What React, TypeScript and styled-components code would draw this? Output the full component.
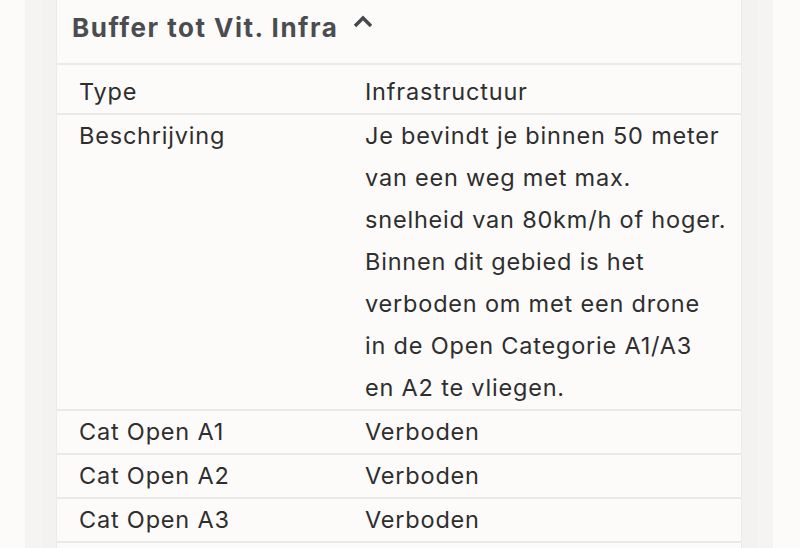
import React from "react";
import styled, { createGlobalStyle } from "styled-components";

const Global = createGlobalStyle`
  html, body { margin: 0; padding: 0; background: #fcfbfa; }
  body { font-family: "Inter", "Noto Sans", sans-serif; -webkit-font-smoothing: antialiased; }
`;

const Page = styled.div`
  height: 548px;
  overflow: hidden;
  padding: 0 27px 0 25px;
  background: #fcfbfa;
`;

const Outer = styled.div`
  height: 100%;
  background: #f5f4f3;
  padding: 0 16px 0 17px;
`;

const Inner = styled.div`
  height: 100%;
  background: #f3f2f1;
  padding: 0 15px 0 14px;
`;

const Card = styled.section`
  background: #fcfbfa;
  border-left: 1px solid #ecebea;
  border-right: 1px solid #ecebea;
  height: 100%;
`;

const Header = styled.header`
  height: 65px;
  box-sizing: border-box;
  border-bottom: 2px solid #ebeae9;
  display: flex;
  align-items: center;
  gap: 14px;
  padding: 0 0 8px 15px;
`;

const Title = styled.h2`
  margin: 0;
  font-size: 26px;
  font-weight: 700;
  letter-spacing: 1.5px;
  color: #4a4c50;
`;

const Caret = styled.svg`
  width: 22px;
  height: 14px;
  margin-top: -14px;
`;

const Table = styled.table`
  width: 100%;
  table-layout: fixed;
  border-collapse: collapse;
  margin-top: 6px;
  font-size: 23.5px;
  letter-spacing: 0.8px;
  color: #2e2e2e;
`;

const Row = styled.tr`
  border-bottom: 2px solid #ebeae9;
`;

const Cell = styled.td<{ $wide?: boolean }>`
  vertical-align: top;
  line-height: 42px;
  box-sizing: border-box;
  padding: 0 4px 0 22px;
  width: ${(p) => (p.$wide ? "auto" : "286px")};
`;

const Line = styled.span`
  display: block;
  white-space: nowrap;
`;

const rows: [string, string[]][] = [
  ["Type", ["Infrastructuur"]],
  [
    "Beschrijving",
    [
      "Je bevindt je binnen 50 meter",
      "van een weg met max.",
      "snelheid van 80km/h of hoger.",
      "Binnen dit gebied is het",
      "verboden om met een drone",
      "in de Open Categorie A1/A3",
      "en A2 te vliegen.",
    ],
  ],
  ["Cat Open A1", ["Verboden"]],
  ["Cat Open A2", ["Verboden"]],
  ["Cat Open A3", ["Verboden"]],
];

export default function App() {
  return (
    <>
      <Global />
      <Page>
        <Outer>
          <Inner>
            <Card>
              <Header>
                <Title>Buffer tot Vit. Infra</Title>
                <Caret viewBox="0 0 22 14">
                  <path d="M3 12 L11 4 L19 12" fill="none" stroke="#45474b" strokeWidth="3.4" />
                </Caret>
              </Header>
              <Table>
                <tbody>
                  {rows.map(([k, lines]) => (
                    <Row key={k}>
                      <Cell>{k}</Cell>
                      <Cell $wide>
                        {lines.map((l) => (
                          <Line key={l}>{l} </Line>
                        ))}
                      </Cell>
                    </Row>
                  ))}
                </tbody>
              </Table>
            </Card>
          </Inner>
        </Outer>
      </Page>
    </>
  );
}
